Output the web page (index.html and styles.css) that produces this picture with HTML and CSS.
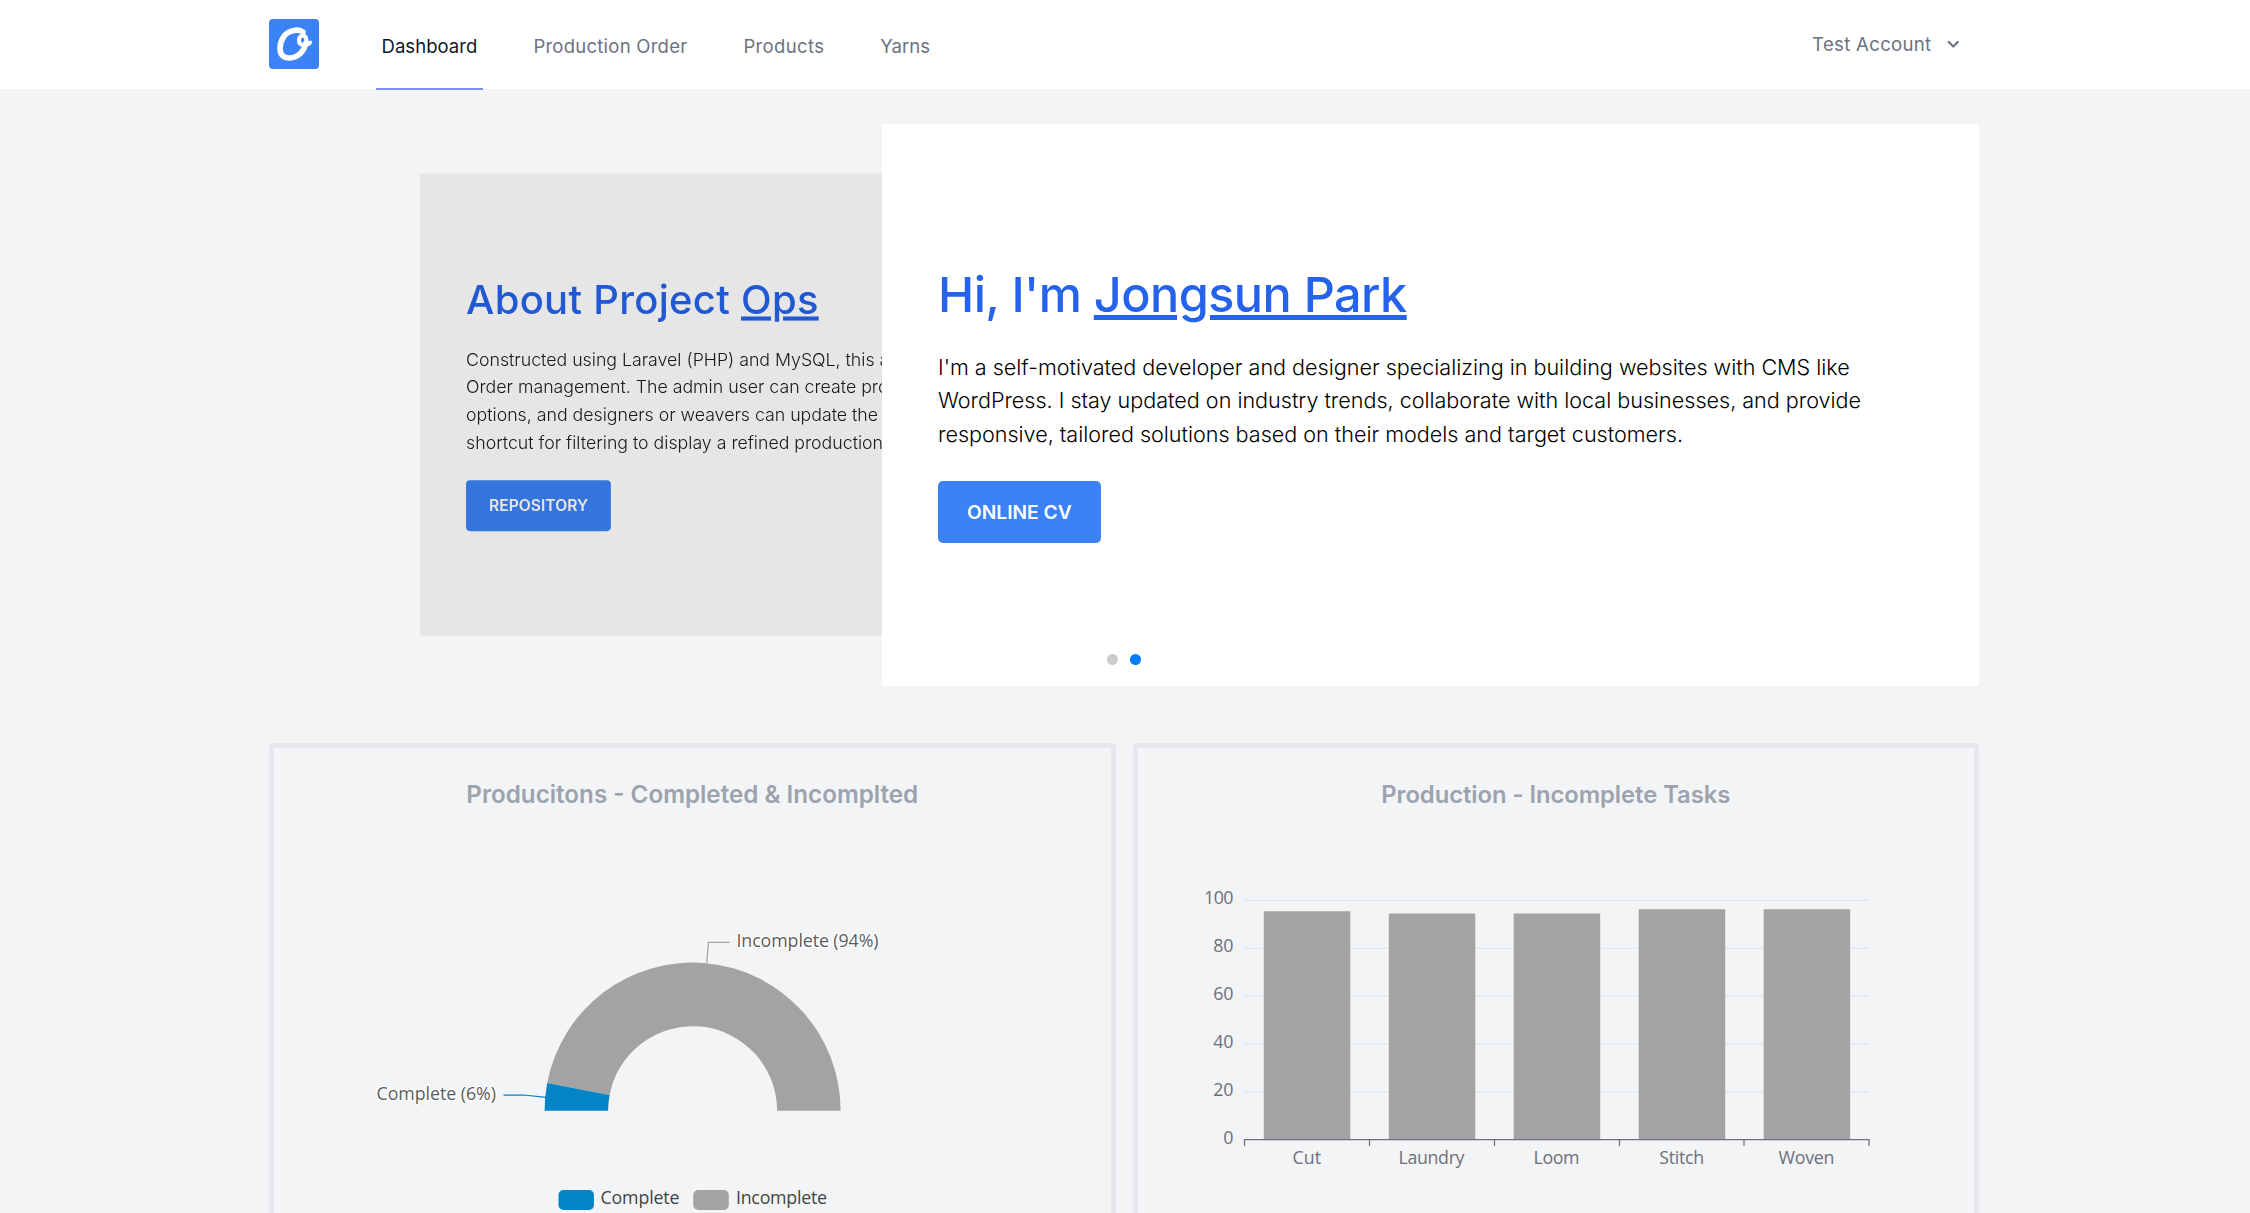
FILE: index.html
```html
<!DOCTYPE html>
<html lang="en">
<head>
<meta charset="utf-8">
<title>Dashboard</title>
<link rel="stylesheet" href="styles.css">
</head>
<body>
<header class="topbar">
  <div class="container topbar-inner">
    <a class="logo" aria-label="Home">
      <svg viewBox="0 0 50 50" width="50" height="50" fill="none" stroke="#fff" stroke-linecap="round">
        <rect width="50" height="50" rx="4" fill="#3b82f6" stroke="none"/>
        <path d="M34 13C31 11 28 10.800 25 11.500C15.500 13 11 21.500 11 29.500C11 36 15 39.300 20.500 39C29 38.500 35.500 32 36.300 25" stroke-width="5.600"/>
        <path d="M36.500 25C38.500 20 37 16.500 33.500 16.700C29.500 17 28.800 23.500 32 25.300C35.500 27 39 26 41.200 23.500" stroke-width="4"/>
      </svg>
    </a>
    <nav class="nav">
      <a class="nav-link active">Dashboard</a>
      <a class="nav-link wide">Production Order</a>
      <a class="nav-link wider">Products</a>
      <a class="nav-link">Yarns</a>
    </nav>
    <button class="account">
      <span>Test Account</span>
      <svg viewBox="0 0 20 20" width="22.500" height="22.500" fill="currentColor"><path fill-rule="evenodd" clip-rule="evenodd" d="M5.293 7.293a1 1 0 011.414 0L10 10.586l3.293-3.293a1 1 0 111.414 1.414l-4 4a1 1 0 01-1.414 0l-4-4a1 1 0 010-1.414z"/></svg>
    </button>
  </div>
</header>
<main class="container">
  <section class="carousel">
    <article class="slide slide-back">
      <h2 class="about">About Project <a>Ops</a></h2>
      <p>Constructed using Laravel (PHP) and MySQL, this app handles<br>Order management. The admin user can create products and<br>options, and designers or weavers can update the status with a<br>shortcut for filtering to display a refined production list.</p>
      <a class="btn">REPOSITORY</a>
    </article>
    <article class="slide slide-front">
      <h2>Hi, I'm <a>Jongsun Park</a></h2>
      <p>I'm a self-motivated developer and designer specializing in building websites with CMS like<br>WordPress. I stay updated on industry trends, collaborate with local businesses, and provide<br>responsive, tailored solutions based on their models and target customers.</p>
      <a class="btn">ONLINE CV</a>
    </article>
    <div class="dots"><span class="dot"></span><span class="dot current"></span></div>
  </section>
  <section class="cards">
    <div class="card">
      <h3>Producitons - Completed &amp; Incomplted</h3>
      <svg class="chart" viewBox="274 830 836.500 400" width="836.500" height="400">
        <path fill="#a3a3a3" d="M547.200 1083 A148 148 0 0 1 840.600 1110.700 H777.100 A84.500 84.500 0 0 0 609.600 1094.900 Z"/>
        <path fill="#0284c7" d="M544.600 1110.700 A148 148 0 0 1 547.200 1083 L609.600 1094.900 A84.500 84.500 0 0 0 608.100 1110.700 Z"/>
        <path class="lead" stroke="#a3a3a3" d="M706.700 963.300L708.500 942.300H729.700"/>
        <path class="lead" stroke="#0284c7" d="M503.500 1095H523.700L546 1097.300"/>
        <text class="callout" x="736.500" y="947.300" textLength="142">Incomplete (94%)</text>
        <text class="callout" x="376.500" y="1099.500" textLength="119.500">Complete (6%)</text>
        <rect x="558.500" y="1190" width="35.500" height="20" rx="5" fill="#0284c7"/>
        <text class="legend" x="600.500" y="1204" textLength="79">Complete</text>
        <rect x="693.300" y="1190" width="35.500" height="20" rx="5" fill="#a3a3a3"/>
        <text class="legend" x="736" y="1204" textLength="91">Incomplete</text>
      </svg>
    </div>
    <div class="card">
      <h3 class="tight">Production - Incomplete Tasks</h3>
      <svg class="chart" viewBox="1137.500 830 836.500 400" width="836.500" height="400">
        <path stroke="#e0e6f1" stroke-width="1.250" d="M1243.500 900.300H1868.600M1243.500 948.300H1868.600M1243.500 996.200H1868.600M1243.500 1044.200H1868.600M1243.500 1092.200H1868.600"/>
        <path fill="#a3a3a3" d="M1263.300 911.300h86.500v228h-86.500zM1388.300 913.500h86.500v226h-86.500zM1513.200 913.500h86.500v226h-86.500zM1638.200 909.200h86.500v230h-86.500zM1763.200 909.200h86.500v230h-86.500z"/>
        <path stroke="#6e7079" stroke-width="1.250" fill="none" d="M1243.500 1139.500H1869M1244 1139.500v6.500M1369 1139.500v6.500M1494 1139.500v6.500M1619 1139.500v6.500M1743.500 1139.500v6.500M1868.500 1139.500v6.500"/>
        <g class="axis y">
          <text x="1233" y="904" textLength="29.500">100</text><text x="1233" y="952">80</text><text x="1233" y="999.500">60</text>
          <text x="1233" y="1047.500">40</text><text x="1233" y="1095.500">20</text><text x="1233" y="1143.500">0</text>
        </g>
        <g class="axis x">
          <text x="1306.300" y="1163.500" textLength="28.500">Cut</text><text x="1431" y="1163.500" textLength="66">Laundry</text><text x="1556" y="1163.500" textLength="46">Loom</text>
          <text x="1681.200" y="1163.500" textLength="45">Stitch</text><text x="1806" y="1163.500" textLength="56">Woven</text>
        </g>
      </svg>
    </div>
  </section>
</main>
</body>
</html>
```
FILE: styles.css
```css
* { box-sizing: border-box; margin: 0; padding: 0; }
body {
  background: #f3f4f6;
  font-family: Inter, "Open Sans", sans-serif;
  height: 1213px;
  overflow: hidden;
  color: #000;
}
.container { width: 1710px; margin-left: 269px; }

.topbar { background: #fff; height: 89px; }
.topbar-inner { display: flex; height: 90px; }
.logo { padding-top: 19px; width: 50px; height: 69px; }
.logo svg { display: block; }
.nav { display: flex; margin-left: 57px; gap: 45px; }
.nav-link {
  display: flex;
  align-items: center;
  padding: 4px 5.5px 0;
  border-bottom: 2px solid transparent;
  font-size: 18.500px;
  letter-spacing: 0.050px;
  color: #6b7280;
}
.nav-link.active { color: #111827; border-color: #818cf8; }
.nav-link.wide { letter-spacing: 0.250px; }
.nav-link.wider { letter-spacing: 0.350px; }
.account {
  display: flex;
  align-items: center;
  gap: 10px;
  height: 88px;
  margin-left: auto;
  padding-right: 15px;
  border: 0;
  background: none;
  font: 400 18.600px Inter, sans-serif;
  letter-spacing: 0.300px;
  color: #6b7280;
}

.carousel { display: grid; margin-top: 35px; height: 562px; position: relative; }
.slide {
  grid-area: 1 / 1;
  width: 1097px;
  height: 562px;
  padding-left: 56px;
  display: flex;
  flex-direction: column;
  align-items: flex-start;
  justify-content: center;
  background: #fff;
  white-space: nowrap;
}
.slide-front { justify-self: end; z-index: 1; }
.slide-back {
  margin-left: 151px;
  transform: translateY(-0.500px) scale(0.8226);
  transform-origin: left center;
  filter: brightness(0.9);
}
.slide h2 {
  font-size: 48.600px;
  font-weight: 500;
  line-height: 54px;
  letter-spacing: -0.550px;
  color: #2563eb;
}
.slide h2 a { text-decoration: underline; text-decoration-thickness: 5px; text-underline-offset: 3px; }
.slide .about { font-size: 48.600px; letter-spacing: 0.350px; }
.slide p {
  margin: 29px 0 28.750px;
  font-size: 21.600px;
  font-weight: 300;
  line-height: 33.750px;
  letter-spacing: -0.020px;
}
.slide-back p { color: #1c1c1c; }
.btn {
  display: flex;
  align-items: center;
  height: 62px;
  padding: 0 29px;
  border-radius: 5px;
  background: #3b82f6;
  color: #fff;
  font-size: 19.200px;
  font-weight: 600;
}
.slide-back .btn { padding: 0 28px; font-size: 19px; }
.dots { position: absolute; z-index: 2; left: 838px; top: 530px; display: flex; gap: 12px; }
.dot { width: 11px; height: 11px; border-radius: 50%; background: #ccc; }
.dot.current { background: #007aff; }

.cards { display: grid; grid-template-columns: 1fr 1fr; gap: 17px; margin-top: 57px; }
.card { height: 520px; border: 5px solid #e5e7eb; border-radius: 5px; overflow: hidden; }
.card h3 {
  height: 82px;
  padding-top: 29px;
  text-align: center;
  font-size: 24.200px;
  line-height: 36px;
  font-weight: 600;
  color: #9ca3af;
}
.card .tight { font-size: 23.800px; letter-spacing: -0.050px; }
.chart { display: block; font-family: "Open Sans", "Noto Sans", sans-serif; font-size: 17.800px; }
.lead { fill: none; stroke-width: 1.250; }
.callout { fill: #5c5c5c; stroke: #fff; stroke-width: 2.500px; stroke-linejoin: round; paint-order: stroke; }
.legend { fill: #444; }
.axis { fill: #6e7079; }
.axis.y { text-anchor: end; }
.axis.x { text-anchor: middle; }
```
